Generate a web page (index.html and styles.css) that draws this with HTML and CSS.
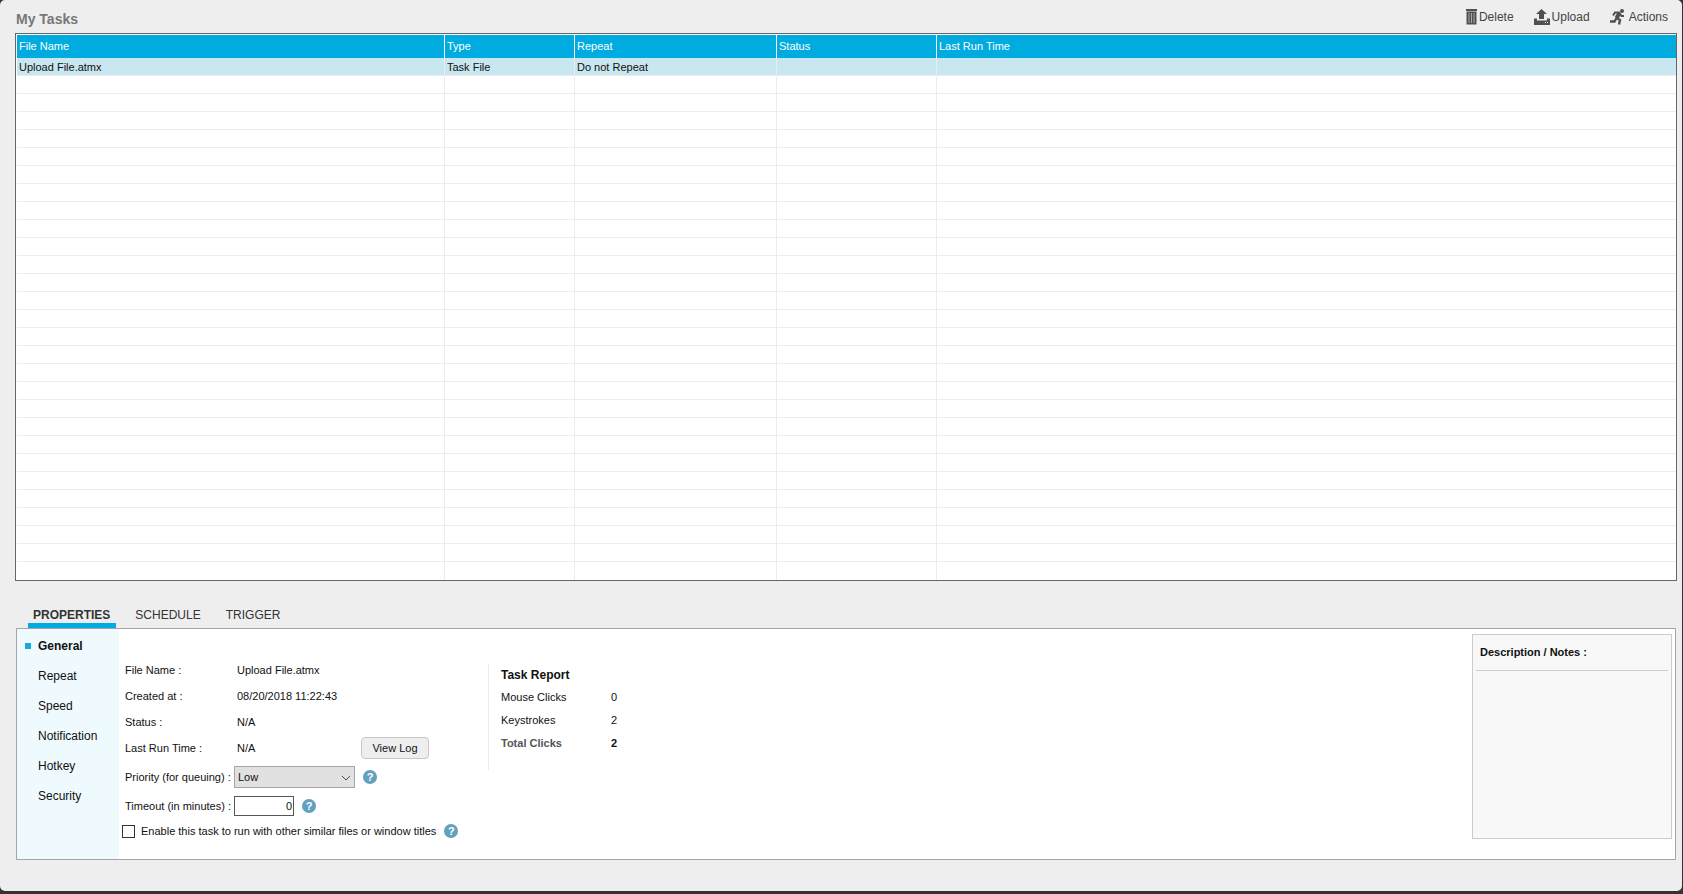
FILE: index.html
```html
<!DOCTYPE html>
<html lang="en">
<head>
  <meta charset="UTF-8">
  <meta name="viewport" content="width=device-width, initial-scale=1.0">
  <title>My Tasks</title>
  <link rel="stylesheet" href="styles.css">
</head>
<body>

  <div class="window">
    <header class="topbar">
      <h1>My Tasks</h1>
      <div class="actions">
        <button class="action" type="button">
          <svg width="11" height="16" viewBox="0 0 11 16" aria-hidden="true">
            <path fill="#505050" d="M0 0h11v2H0zM.5 2.500h10v13H.5z"/>
            <path stroke="#a8a8a8" d="M3 4v10M5.500 4v10M8 4v10"/>
          </svg>
          Delete
        </button>
        <button class="action" type="button">
          <svg width="16" height="16" viewBox="0 0 16 16" aria-hidden="true">
            <path fill="#505050" d="M7.500 0L13 5H10v5H5V5H2zM0 9.500h3v2h10v-2h3V16H0z"/>
            <path fill="#eee" d="M11 13h1v1h-1zM13 13h1v1h-1z"/>
          </svg>
          Upload
        </button>
        <button class="action run" type="button">
          <svg width="15" height="16" viewBox="0 0 15 16" aria-hidden="true">
            <circle cx="12" cy="2" r="2" fill="#505050"/>
            <g fill="none" stroke="#505050">
              <path stroke-width="2" d="M3 6.500L5 3.500h4L11.500 7H14"/>
              <path stroke-width="4" d="M9.500 4L6.500 9"/>
              <path stroke-width="2.400" d="M6 8.500l4 2.500-1 4.500M6.500 9L4.500 12.500H0"/>
            </g>
          </svg>
          Actions
        </button>
      </div>
    </header>

    <main>
      <div class="task-list">
        <table>
          <colgroup>
            <col class="col-name">
            <col class="col-type">
            <col class="col-repeat">
            <col class="col-status">
            <col>
          </colgroup>
          <thead>
            <tr><th>File Name</th><th>Type</th><th>Repeat</th><th>Status</th><th>Last Run Time</th></tr>
          </thead>
          <tbody id="tasks">
            <tr class="selected"><td>Upload File.atmx</td><td>Task File</td><td>Do not Repeat</td><td></td><td></td></tr>
          </tbody>
        </table>
      </div>

      <nav class="tabs">
        <a class="active" href="#properties">PROPERTIES</a>
        <a href="#schedule">SCHEDULE</a>
        <a href="#trigger">TRIGGER</a>
      </nav>

      <section class="panel" id="properties">
        <nav class="side">
          <a class="active" href="#general">General</a>
          <a href="#repeat">Repeat</a>
          <a href="#speed">Speed</a>
          <a href="#notification">Notification</a>
          <a href="#hotkey">Hotkey</a>
          <a href="#security">Security</a>
        </nav>

        <form class="general" id="general">
          <div class="row"><span class="name">File Name :</span><span class="value">Upload File.atmx</span></div>
          <div class="row"><span class="name">Created at :</span><span class="value">08/20/2018 11:22:43</span></div>
          <div class="row"><span class="name">Status :</span><span class="value">N/A</span></div>
          <div class="row"><span class="name">Last Run Time :</span><span class="value">N/A</span><button class="log-btn" type="button">View Log</button></div>
          <div class="row row-priority">
            <label class="name" for="priority">Priority (for queuing) :</label>
            <span class="select">
              <select id="priority">
                <option>Low</option>
                <option>Medium</option>
                <option>High</option>
              </select>
              <svg width="10" height="6" viewBox="0 0 10 6" aria-hidden="true"><path fill="none" stroke="#505050" d="M1 1l4 4 4-4"/></svg>
            </span>
            <button class="help" type="button">?</button>
          </div>
          <div class="row">
            <label class="name" for="timeout">Timeout (in minutes) :</label>
            <input class="timeout" type="text" id="timeout" value="0">
            <button class="help" type="button">?</button>
          </div>
          <div class="row row-enable">
            <input class="check" type="checkbox" id="enable">
            <label for="enable">Enable this task to run with other similar files or window titles</label>
            <button class="help" type="button">?</button>
          </div>
        </form>

        <div class="report">
          <h2>Task Report</h2>
          <dl>
            <dt>Mouse Clicks</dt><dd>0</dd>
            <dt>Keystrokes</dt><dd>2</dd>
            <dt class="total">Total Clicks</dt><dd class="sum">2</dd>
          </dl>
        </div>

        <div class="notes">
          <label for="notes">Description / Notes :</label>
          <textarea id="notes"></textarea>
        </div>
      </section>
    </main>
  </div>

  <script>
    // fill the rest of the grid with empty rows
    const tasks = document.getElementById("tasks");
    for (let i = 0; i < 28; i++) {
      const row = tasks.insertRow();
      for (let j = 0; j < 5; j++) row.insertCell();
    }
  </script>

</body>
</html>
```

FILE: styles.css
```css
* { box-sizing: border-box; }

body {
  margin: 0;
  min-height: 100vh;
  padding: 0 1px 3px 0;
  display: flex;
  background: #333;
  color: #111;
  font-family: "Liberation Sans", Arial, sans-serif;
  font-size: 11px;
}

button, input, select, textarea {
  font: inherit;
  color: inherit;
  margin: 0;
}

a {
  color: inherit;
  text-decoration: none;
}

.window {
  flex: 1;
  background: #eee;
  border-radius: 5px;
  padding: 0 5px 31px 15px;
}

.topbar {
  display: flex;
  justify-content: space-between;
  height: 33px;
}

h1 {
  margin: 0;
  padding: 11px 0 0 1px;
  font-size: 14px;
  line-height: 16px;
  color: #777;
}

.actions {
  display: flex;
  align-items: center;
  gap: 20px;
  padding-right: 9px;
}

.action {
  display: flex;
  align-items: center;
  gap: 2px;
  padding: 0;
  border: 0;
  background: none;
  color: #444;
  font-size: 12px;
  cursor: pointer;
}

.run { gap: 4px; }

/* task grid */
.task-list {
  border: 1px solid #666;
  background: #fff;
  padding: 1px 0 0 1px;
}

table {
  width: 100%;
  table-layout: fixed;
  border-spacing: 0;
}

.col-name { width: 428px; }
.col-type { width: 130px; }
.col-repeat { width: 202px; }
.col-status { width: 160px; }

th, td {
  height: 18px;
  padding: 0 2px;
  border-right: 1px solid #ececec;
  border-bottom: 1px solid #ececec;
  text-align: left;
  font-weight: normal;
  white-space: nowrap;
}

th {
  height: 23px;
  padding-bottom: 2px;
  background: #00abdf;
  color: #fff;
  border-right-color: #fff;
  border-bottom: 0;
}

th:last-child, td:last-child { border-right: 0; }
tr:last-child td { border-bottom: 0; }
.selected td { background: #c8e7f0; }

/* tabs */
.tabs {
  display: flex;
  gap: 13px;
  margin-top: 27px;
  padding-left: 13px;
}

.tabs a {
  height: 20px;
  padding: 0 6px;
  border-bottom: 5px solid transparent;
  font-size: 12px;
  line-height: 14px;
  color: #333;
}

.tabs .active {
  padding-left: 5px;
  border-color: #00abdf;
  font-weight: bold;
}

.panel {
  display: flex;
  margin: 0 1px;
  border: 1px solid #a5a5a5;
  background: #fff;
}

.side {
  width: 102px;
  padding-top: 2px;
  background: #effaff;
  font-size: 12px;
}

.side a {
  display: flex;
  align-items: center;
  height: 30px;
  padding-left: 21px;
}

.side .active {
  padding-left: 8px;
  gap: 7px;
  font-weight: bold;
}

.side .active::before {
  content: "";
  width: 6px;
  height: 6px;
  background: #18abd8;
}

/* general properties */
.general {
  width: 369px;
  padding: 28px 0 16px 6px;
}

.row {
  display: flex;
  align-items: center;
  height: 26px;
  white-space: nowrap;
}

.row-priority { height: 32px; }

.name { width: 109px; }

.value {
  width: 127px;
  padding-left: 3px;
}

.log-btn {
  width: 68px;
  height: 22px;
  padding: 0;
  border: 1px solid #c8c8c8;
  border-radius: 4px;
  background: #eee;
}

.select {
  position: relative;
  width: 121px;
}

.select select {
  appearance: none;
  display: block;
  width: 100%;
  height: 22px;
  padding: 0 3px;
  border: 1px solid #a5a5a5;
  border-radius: 0;
  background: #e1e1e1;
}

.select svg {
  position: absolute;
  right: 4px;
  top: 9px;
  pointer-events: none;
}

.timeout {
  width: 60px;
  height: 20px;
  padding: 0 1px;
  border: 1px solid #555;
  text-align: right;
}

.help {
  width: 14px;
  height: 14px;
  margin-left: 8px;
  padding: 0;
  border: 0;
  border-radius: 50%;
  background: #62a0bf;
  color: #fff;
  font-weight: bold;
  line-height: 14px;
}

.row-enable {
  height: 24px;
  margin-left: -3px;
}

.row-enable label { padding-left: 6px; }

.check {
  appearance: none;
  width: 13px;
  height: 13px;
  border: 1px solid #333;
  background: #fff;
}

.check:checked { background: #00abdf; }

/* report */
.report {
  align-self: flex-start;
  width: 150px;
  height: 106px;
  margin-top: 35px;
  padding-left: 12px;
  border-left: 1px solid #ececec;
}

.report h2 {
  margin: 0;
  font-size: 12px;
  line-height: 22px;
}

.report dl {
  display: grid;
  grid-template-columns: 110px auto;
  margin: 0;
  line-height: 23px;
}

.report dd { margin: 0; }
.total, .sum { font-weight: bold; }
.total { color: #555; }

/* notes */
.notes {
  display: flex;
  flex-direction: column;
  width: 200px;
  margin: 5px 3px 20px auto;
  padding: 0 3px;
  border: 1px solid #ccccc0;
  background: #f8f8f8;
}

.notes label {
  padding: 0 4px;
  border-bottom: 1px solid #d0d0c4;
  font-weight: bold;
  line-height: 35px;
}

.notes textarea {
  flex: 1;
  width: 100%;
  border: 0;
  background: none;
  resize: none;
  outline: none;
}
```
